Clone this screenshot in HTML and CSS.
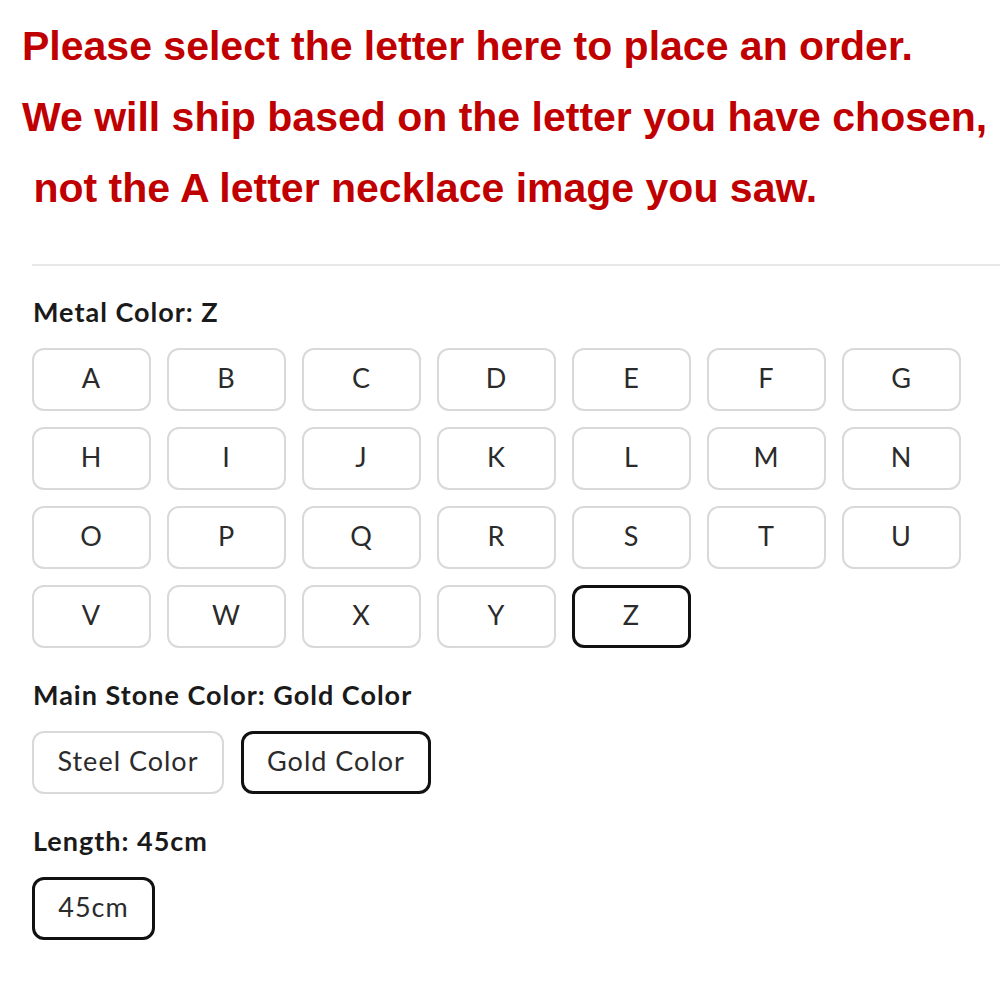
FILE: index.html
```html
<!DOCTYPE html>
<html lang="en">
<head>
  <meta charset="UTF-8">
  <meta name="viewport" content="width=device-width, initial-scale=1.0">
  <title>Letter Necklace Options</title>
  <link rel="stylesheet" href="styles.css">
</head>
<body>
  <!-- Notice about the letter choice -->
  <div class="notice">
    <p>Please select the letter here to place an order.</p>
    <p>We will ship based on the letter you have chosen,</p>
    <p>&nbsp;not the A letter necklace image you saw.</p>
  </div>

  <div class="options">
    <div class="option-group first">
      <div class="option-label">Metal Color: Z</div>
      <div class="letter-grid">
        <button class="swatch">A</button>
        <button class="swatch">B</button>
        <button class="swatch">C</button>
        <button class="swatch">D</button>
        <button class="swatch">E</button>
        <button class="swatch">F</button>
        <button class="swatch">G</button>
        <button class="swatch">H</button>
        <button class="swatch">I</button>
        <button class="swatch">J</button>
        <button class="swatch">K</button>
        <button class="swatch">L</button>
        <button class="swatch">M</button>
        <button class="swatch">N</button>
        <button class="swatch">O</button>
        <button class="swatch">P</button>
        <button class="swatch">Q</button>
        <button class="swatch">R</button>
        <button class="swatch">S</button>
        <button class="swatch">T</button>
        <button class="swatch">U</button>
        <button class="swatch">V</button>
        <button class="swatch">W</button>
        <button class="swatch">X</button>
        <button class="swatch">Y</button>
        <button class="swatch selected">Z</button>
      </div>
    </div>

    <div class="option-group">
      <div class="option-label">Main Stone Color: Gold Color</div>
      <div class="swatch-row">
        <button class="swatch wide steel">Steel Color</button>
        <button class="swatch wide gold selected">Gold Color</button>
      </div>
    </div>

    <div class="option-group">
      <div class="option-label">Length: 45cm</div>
      <div class="swatch-row">
        <button class="swatch wide length selected">45cm</button>
      </div>
    </div>
  </div>
</body>
</html>
```

FILE: styles.css
```css
body {
  margin: 0;
  background: #fff;
  font-family: Lato, "Open Sans", sans-serif;
}

.notice {
  padding: 11px 0 0 22px;
}

.notice p {
  margin: 0;
  font-family: "Liberation Sans", Arial, sans-serif;
  font-weight: bold;
  font-size: 41px;
  line-height: 71px;
  color: #c00000;
  white-space: pre;
}

.options {
  margin-top: 40px;
  margin-left: 32px;
  border-top: 2px solid #e8e8e8;
  padding-top: 30px;
}

.option-group {
  margin-top: 31px;
}

.option-group.first {
  margin-top: 0;
}

.option-label {
  font-weight: bold;
  font-size: 27px;
  line-height: 31px;
  letter-spacing: 1px;
  color: #1a1a1a;
  margin-bottom: 21px;
  padding-left: 1px;
}

.letter-grid {
  display: grid;
  grid-template-columns: repeat(7, 119px);
  column-gap: 16px;
  row-gap: 16px;
}

.swatch-row {
  display: flex;
  gap: 17px;
}

.swatch {
  box-sizing: border-box;
  height: 63px;
  display: flex;
  align-items: center;
  justify-content: center;
  background: #fff;
  border: 2px solid #d9d9d9;
  border-radius: 12px;
  font-family: Lato, "Open Sans", sans-serif;
  font-size: 27px;
  letter-spacing: 1px;
  color: #2b2b2b;
  padding: 0 0 4px;
  cursor: pointer;
}

.swatch.selected {
  border: 3px solid #111;
}

.swatch.steel {
  width: 192px;
}

.swatch.gold {
  width: 190px;
}

.swatch.length {
  width: 123px;
}
```
